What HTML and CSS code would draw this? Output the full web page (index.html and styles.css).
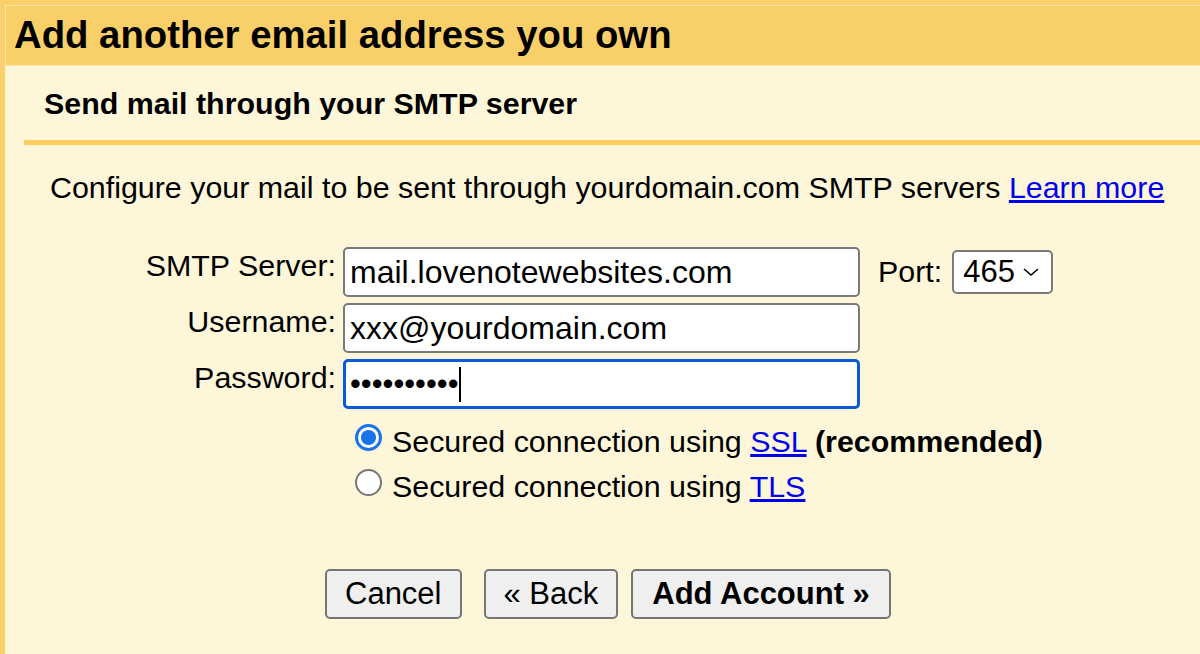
FILE: index.html
```html
<!DOCTYPE html>
<html>
<head>
    <title>Add another email address you own</title>
    <link rel="stylesheet" href="styles.css">
</head>
<body>
    <div class="dialog">
        <div class="dialog-title">Add another email address you own</div>
        <div class="dialog-body">
            <h2 class="step-title">Send mail through your SMTP server</h2>
            <div class="divider"></div>
            <p class="intro">Configure your mail to be sent through yourdomain.com SMTP servers <a href="#">Learn more</a></p>

            <div class="form">
                <label class="form-label">SMTP Server:</label>
                <div class="field">mail.lovenotewebsites.com</div>
                <div class="port">
                    <span class="port-label">Port:</span>
                    <span class="select">465
                        <svg class="chevron" width="20" height="12" viewBox="0 0 20 12"><path d="M3 3 L10 9 L17 3" fill="none" stroke="#000" stroke-width="1.6"/></svg>
                    </span>
                </div>

                <label class="form-label">Username:</label>
                <div class="field">xxx@yourdomain.com</div>
                <div></div>

                <label class="form-label">Password:</label>
                <div class="field focused"><span class="dots">••••••••••</span><span class="caret"></span></div>
                <div></div>
            </div>

            <div class="options">
                <div class="option">
                    <span class="radio checked"></span>
                    <span>Secured connection using <a href="#">SSL</a> <b>(recommended)</b></span>
                </div>
                <div class="option">
                    <span class="radio"></span>
                    <span>Secured connection using <a href="#">TLS</a></span>
                </div>
            </div>

            <div class="buttons">
                <button class="btn">Cancel</button>
                <button class="btn back">« Back</button>
                <button class="btn primary">Add Account »</button>
            </div>
        </div>
    </div>
</body>
</html>
```

FILE: styles.css
```css
html, body {
    margin: 0;
    height: 100%;
}
body {
    font-family: "Liberation Sans", Arial, sans-serif;
    background: #fef6d9;
    color: #000;
    overflow: hidden;
}
.dialog {
    border-top: 5px solid #fbd06a;
    border-left: 5px solid #fbd06a;
    min-height: 100%;
    box-sizing: border-box;
}
.dialog-title {
    background: #f9cf69;
    border-top: 1px solid #fde7a8;
    border-left: 1px solid #fde7a8;
    border-bottom: 1px solid #fde7a8;
    height: 61px;
    box-sizing: border-box;
    padding-left: 8px;
    font-size: 38.3px;
    font-weight: bold;
    line-height: 58px;
}
.dialog-body {
    padding-left: 19px;
}
.step-title {
    margin: 0;
    padding: 19px 0 0 20px;
    height: 55px;
    font-size: 30.4px;
    font-weight: bold;
    line-height: 36px;
}
.divider {
    height: 5px;
    background: #fbce5f;
}
.intro {
    margin: 0;
    padding: 24px 0 0 26px;
    font-size: 30.4px;
    line-height: 36px;
}
a {
    color: #0000ee;
}
.form {
    display: grid;
    grid-template-columns: 312px 517px auto;
    column-gap: 7px;
    row-gap: 6px;
    margin-top: 42px;
}
.form-label {
    text-align: right;
    font-size: 30.4px;
    line-height: 36px;
}
.field {
    height: 50px;
    box-sizing: border-box;
    background: #fff;
    border: 2px solid #7a7a7a;
    border-radius: 5px;
    padding: 0 5px;
    font-size: 32px;
    line-height: 46px;
    display: flex;
    align-items: center;
}
.field.focused {
    border: 3px solid #0b5ad6;
    padding: 0 4px;
}
.dots {
    font-size: 31px;
    letter-spacing: 0;
}
.caret {
    width: 2px;
    height: 35px;
    background: #000;
    margin-left: 0;
}
.port {
    display: flex;
    align-items: flex-start;
    margin-left: 11px;
    padding-top: 3px;
    font-size: 30.4px;
}
.port-label {
    margin-right: 10px;
    line-height: 43px;
}
.select {
    display: flex;
    align-items: center;
    height: 44px;
    box-sizing: border-box;
    border: 2px solid #7a7a7a;
    border-radius: 5px;
    background: #fff;
    padding: 0 10px 0 9px;
    font-size: 31px;
}
.chevron {
    margin-left: 6px;
}
.options {
    margin: 10px 0 0 331px;
    font-size: 30.4px;
}
.option {
    display: flex;
    align-items: center;
    height: 45px;
}
.radio {
    width: 27px;
    height: 27px;
    box-sizing: border-box;
    border-radius: 50%;
    border: 2px solid #767676;
    background: #fff;
    margin-right: 10px;
    margin-top: -8px;
}
.radio.checked {
    border: 3px solid #1a73e8;
    background: radial-gradient(circle, #1a73e8 0 7px, #fff 8px);
}
.buttons {
    display: flex;
    margin: 60px 0 0 301px;
}
.btn {
    font-family: "Liberation Sans", Arial, sans-serif;
    font-size: 31px;
    height: 50px;
    padding: 0 18px;
    background: #efefef;
    border: 2px solid #767676;
    border-radius: 5px;
    color: #000;
}
.btn.back {
    margin-left: 22px;
}
.btn.primary {
    margin-left: 13px;
    padding: 0 19px;
    font-weight: bold;
}
```
